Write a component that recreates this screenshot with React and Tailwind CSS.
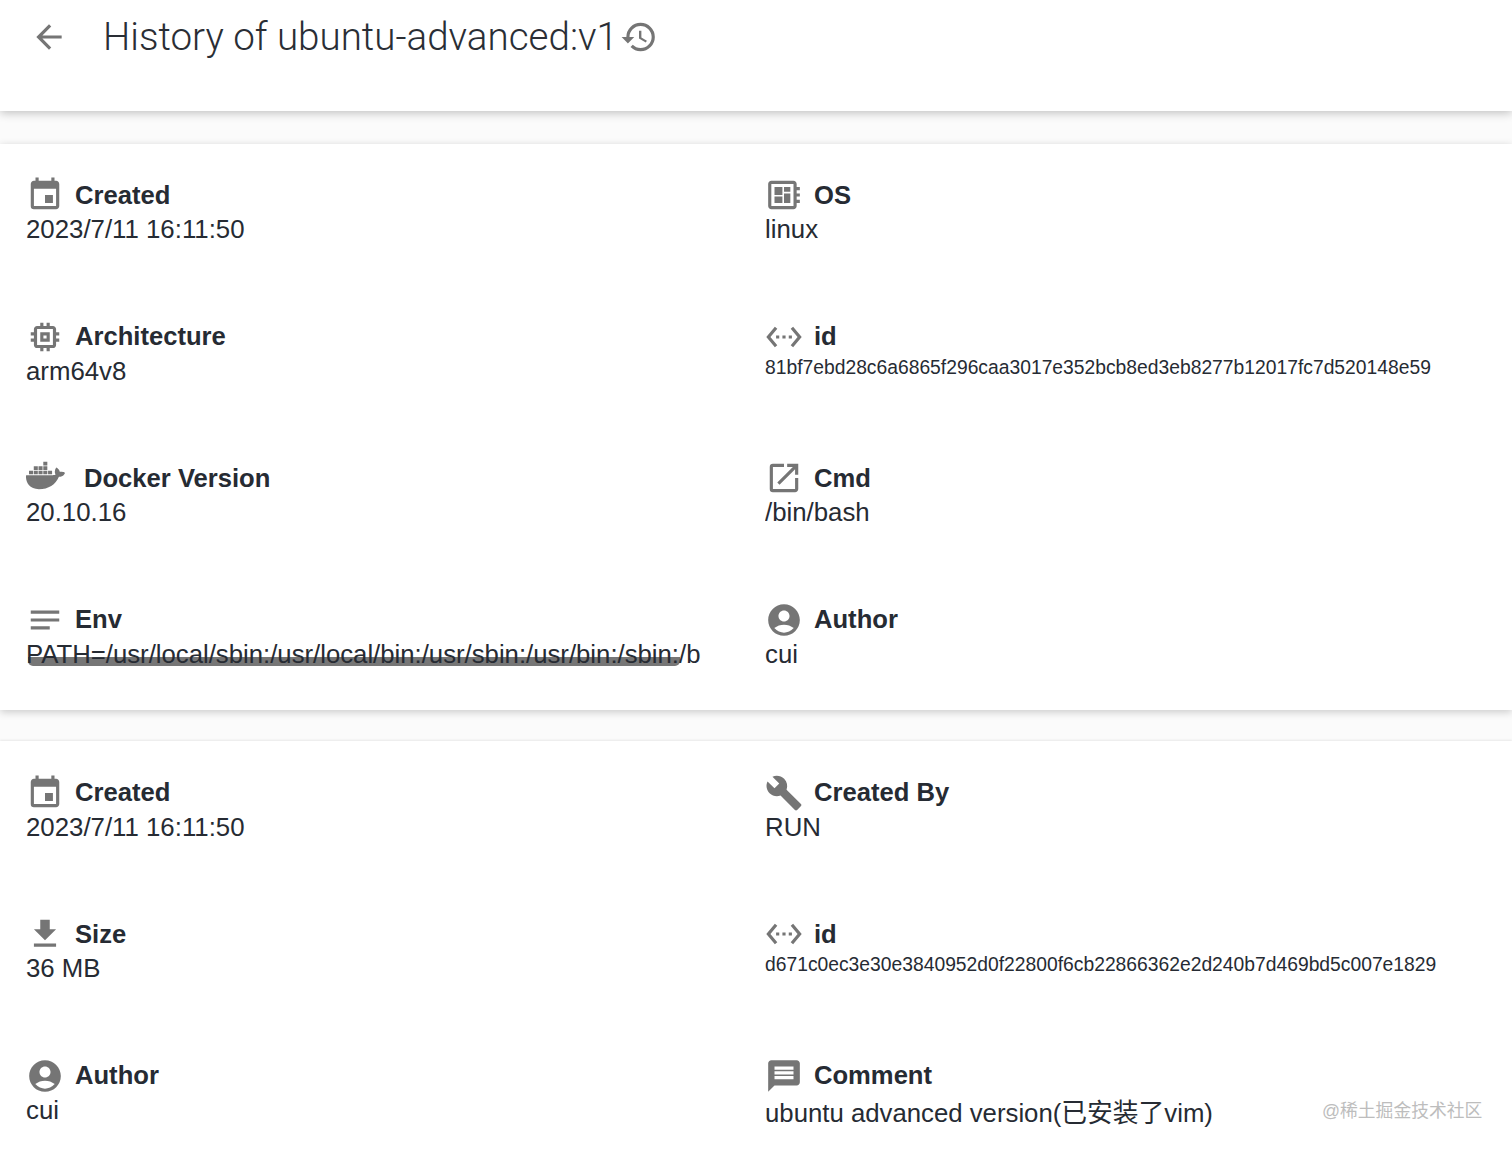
import React from 'react';
import {
  MdArrowBack,
  MdHistory,
  MdEvent,
  MdDeveloperBoard,
  MdMemory,
  MdSettingsEthernet,
  MdOpenInNew,
  MdNotes,
  MdAccountCircle,
  MdBuild,
  MdFileDownload,
  MdMessage,
} from 'react-icons/md';
import { FaDocker } from 'react-icons/fa';

const Field = ({ icon: Icon, label, value, small, wide, scroll, cjk }) => (
  <div className="h-[70px] min-w-0">
    <div className="flex items-center h-[36px]">
      <Icon className={`text-[#757575] shrink-0 ${wide ? 'w-[39px] h-[39px] mr-[19px] -mt-[5px]' : 'w-[38px] h-[38px] mr-[11px]'}`} />
      <span className="text-[25.6px] font-bold text-[#262b33]">{label}</span>
    </div>
    <div
      className={`relative overflow-hidden whitespace-nowrap h-[36px] text-[#262b33] ${
        small ? 'text-[19.3px] leading-[26px]' : cjk ? 'text-[25.75px] leading-[38px]' : scroll ? 'text-[25.72px] leading-[32px]' : 'text-[25.8px] leading-[32px]'
      }`}
    >
      {scroll && <div className="absolute left-[2px] top-[19px] h-[9px] w-[652px] rounded-b-[5px] bg-[#767676]" />}
      <span className="relative">{value}</span>
    </div>
  </div>
);

const Card = ({ fields, className }) => (
  <div className={`bg-white grid grid-cols-[739px_1fr] content-start gap-y-[71.5px] pl-[26px] ${className}`}>
    {fields.map((f, i) => (
      <Field key={i} {...f} />
    ))}
  </div>
);

const first = [
  { icon: MdEvent, label: 'Created', value: '2023/7/11 16:11:50' },
  { icon: MdDeveloperBoard, label: 'OS', value: 'linux' },
  { icon: MdMemory, label: 'Architecture', value: 'arm64v8' },
  { icon: MdSettingsEthernet, label: 'id', small: true, value: '81bf7ebd28c6a6865f296caa3017e352bcb8ed3eb8277b12017fc7d520148e59' },
  { icon: FaDocker, wide: true, label: 'Docker Version', value: '20.10.16' },
  { icon: MdOpenInNew, label: 'Cmd', value: '/bin/bash' },
  { icon: MdNotes, label: 'Env', scroll: true, value: 'PATH=/usr/local/sbin:/usr/local/bin:/usr/sbin:/usr/bin:/sbin:/b' },
  { icon: MdAccountCircle, label: 'Author', value: 'cui' },
];

const second = [
  { icon: MdEvent, label: 'Created', value: '2023/7/11 16:11:50' },
  { icon: MdBuild, label: 'Created By', value: 'RUN' },
  { icon: MdFileDownload, label: 'Size', value: '36 MB' },
  { icon: MdSettingsEthernet, label: 'id', small: true, value: 'd671c0ec3e30e3840952d0f22800f6cb22866362e2d240b7d469bd5c007e1829' },
  { icon: MdAccountCircle, label: 'Author', value: 'cui' },
  { icon: MdMessage, label: 'Comment', cjk: true, value: 'ubuntu advanced version(已安装了vim)' },
];

export default function App() {
  return (
    <div className="relative h-[1150px] overflow-hidden bg-[#fbfbfb] font-['Liberation_Sans','Noto_Sans_CJK_SC',sans-serif]">
      {/* header */}
      <div className="relative z-10 h-[111px] bg-white shadow-[0_2px_9px_rgba(0,0,0,0.24)] flex items-start pt-[11px]">
        <MdArrowBack className="ml-[30px] mt-[7px] w-[38px] h-[38px] text-[#757575]" />
        <h1 className="ml-[35px] text-[38.55px] leading-[52px] font-light text-[#2a2e35] font-['Roboto',sans-serif]">History of ubuntu-advanced:v1</h1>
        <MdHistory className="ml-[2px] mt-[7px] w-[38px] h-[38px] text-[#757575]" />
      </div>

      <Card fields={first} className="mt-[33px] pt-[33px] pb-[38px] shadow-[0_2px_8px_rgba(0,0,0,0.2)] relative" />
      <Card fields={second} className="mt-[31px] pt-[34px] h-[420px] shadow-[0_-1px_2px_rgba(0,0,0,0.08)]" />

      {/* watermark */}
      <div className="absolute left-[1322px] top-[1099px] text-[17.8px] leading-[24px] text-[#bdbdbd] whitespace-nowrap">@稀土掘金技术社区</div>
    </div>
  );
}
